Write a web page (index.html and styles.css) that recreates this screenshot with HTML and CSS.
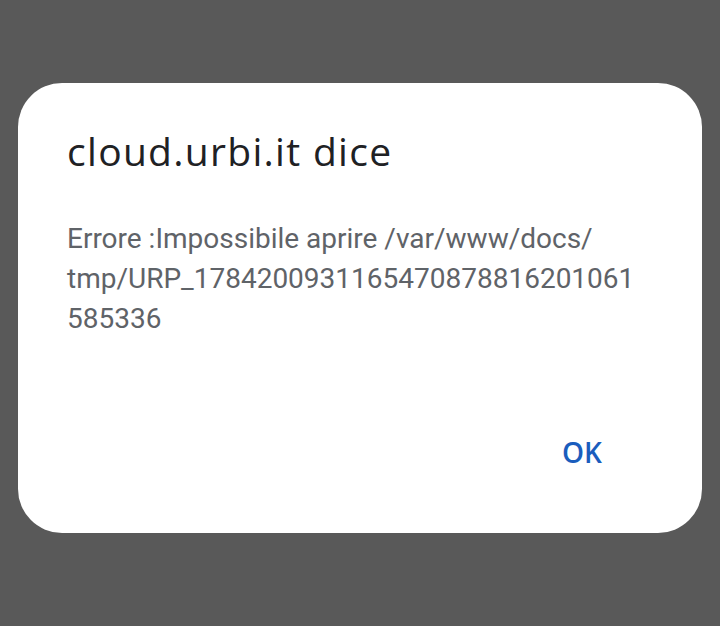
FILE: index.html
```html
<!DOCTYPE html>
<html lang="it">
<head>
<meta charset="utf-8">
<link rel="stylesheet" href="styles.css">
</head>
<body>
<div class="screen">
  <div class="dialog">
    <h1 class="title">cloud.urbi.it dice</h1>
    <p class="message">Errore :Impossibile aprire /var/www/docs/<br>tmp/URP_1784200931165470878816201061<br>585336</p>
    <div class="actions">
      <button class="ok">OK</button>
    </div>
  </div>
</div>
</body>
</html>
```
FILE: styles.css
```css
html, body {
  margin: 0;
  padding: 0;
  background: #595959;
}
.screen {
  width: 720px;
  height: 626px;
  padding: 83px 18px 0 18px;
  box-sizing: border-box;
}
.dialog {
  width: 684px;
  height: 450px;
  background: #ffffff;
  border-radius: 44px;
  box-sizing: border-box;
  padding: 46px 49px 0 49px;
  display: flex;
  flex-direction: column;
}
.title {
  margin: 0;
  font-family: "Open Sans", Lato, sans-serif;
  font-weight: 400;
  font-size: 39px;
  letter-spacing: 1.3px;
  line-height: 44px;
  color: #202124;
}
.message {
  margin: 46px 0 0 0;
  font-family: Roboto, "Noto Sans", sans-serif;
  font-size: 28px;
  line-height: 40px;
  color: #5f6368;
}
.actions {
  display: flex;
  justify-content: flex-end;
  margin-top: 97px;
}
.ok {
  border: none;
  background: none;
  padding: 0;
  margin-right: 51px;
  font-family: "Open Sans", Lato, sans-serif;
  font-weight: 600;
  font-size: 28px;
  line-height: 32px;
  color: #1a5dbd;
}
```
